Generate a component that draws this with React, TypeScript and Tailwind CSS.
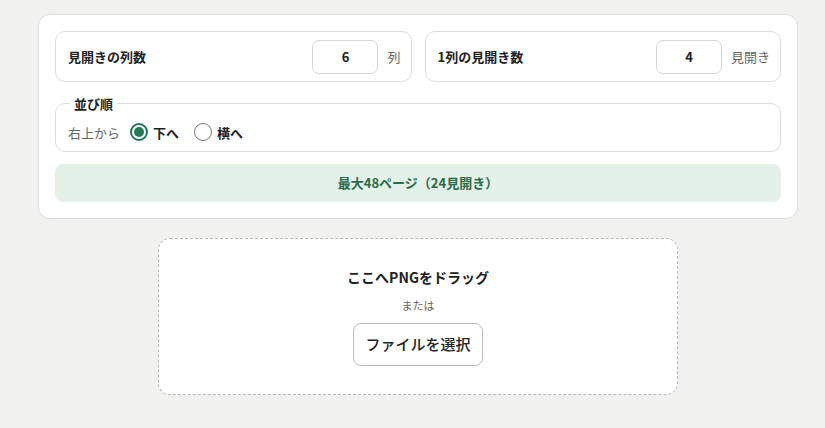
import React, { useState } from "react";

const font = { fontFamily: '"Noto Sans CJK JP", "Noto Sans", sans-serif' };

function NumberField({ label, value, unit }: { label: string; value: number; unit: string }) {
  return (
    <div className="flex-1 flex items-center h-[51px] pl-3 pr-[10px] border border-[#dcdcdc] rounded-[10px] bg-white">
      <span className="text-[13px] font-bold text-[#222]">{label}</span>
      <input
        className="ml-auto w-[66px] h-[34px] border border-[#d6d6d6] rounded-[7px] text-center text-[13px] font-bold text-[#222] outline-none"
        defaultValue={value}
      />
      <span className="ml-[9px] text-[13px] text-[#666]">{unit}</span>
    </div>
  );
}

export default function App() {
  const [order, setOrder] = useState("down");

  return (
    <div className="min-h-[428px] bg-[#f1f2f0] pt-[14px]" style={font}>
      <div className="ml-[38px] w-[760px]">
        {/* Settings card */}
        <div className="bg-white border border-[#dddddd] rounded-[12px] p-4">
          <div className="flex gap-[13px]">
            <NumberField label="見開きの列数" value={6} unit="列" />
            <NumberField label="1列の見開き数" value={4} unit="見開き" />
          </div>

          <fieldset className="mt-[12px] border border-[#dcdcdc] rounded-[10px] px-3 pb-[9px] pt-0">
            <legend className="px-1 ml-[2px] text-[13px] font-bold text-[#222]">並び順</legend>
            <div className="flex items-center text-[13px] mt-[9px]">
              <span className="text-[#666] mr-[10px]">右上から</span>
              <label className="flex items-center gap-[5px] mr-[15px] font-bold text-[#222]" onClick={() => setOrder("down")}>
                <span className="w-[18px] h-[18px] rounded-full border-2 border-[#1f7a55] flex items-center justify-center">
                  {order === "down" && <span className="w-[10px] h-[10px] rounded-full bg-[#1f7a55]" />}
                </span>
                下へ
              </label>
              <label className="flex items-center gap-[5px] font-bold text-[#222]" onClick={() => setOrder("side")}>
                <span className="w-[18px] h-[18px] rounded-full border border-[#767676] flex items-center justify-center">
                  {order === "side" && <span className="w-[10px] h-[10px] rounded-full bg-[#1f7a55]" />}
                </span>
                横へ
              </label>
            </div>
          </fieldset>

          <div className="mt-3 h-[38px] rounded-[8px] bg-[#e4f1e9] flex items-center justify-center text-[13px] font-bold text-[#2a6b4b]">
            最大48ページ（24見開き）
          </div>
        </div>

        {/* Drop zone */}
        <div className="mx-auto mt-[19px] w-[520px] h-[157px] border border-dashed border-[#b8b8b8] rounded-[12px] bg-white flex flex-col items-center pt-[28px]">
          <div className="text-[14px] font-bold text-[#222]">ここへPNGをドラッグ</div>
          <div className="mt-[9px] text-[11px] text-[#666]">または</div>
          <button className="mt-[9px] w-[130px] h-[43px] border border-[#bdbdbd] rounded-[8px] bg-white text-[15px] font-medium text-[#222]">
            ファイルを選択
          </button>
        </div>
      </div>
    </div>
  );
}
